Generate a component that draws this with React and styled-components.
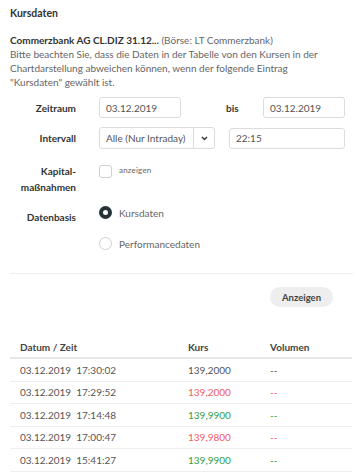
import styled, { createGlobalStyle } from "styled-components";

const GlobalStyle = createGlobalStyle`
  body {
    margin: 0;
    background: #fff;
    font-family: Lato, "Noto Sans", sans-serif;
  }
`;

const Page = styled.div`
  padding: 6px 5px 0 10px;
  color: #555;
`;

const Title = styled.h1`
  margin: 0 0 13px;
  font-size: 10.5px;
  line-height: 14px;
  font-weight: 700;
  color: #333;
`;

const Intro = styled.p`
  margin: 0;
  padding-right: 26px;
  font-size: 10px;
  line-height: 14px;
  color: #666;
`;

const Strong = styled.strong`
  color: #333;
`;

const Form = styled.div`
  margin-top: 8px;
  display: flex;
  flex-direction: column;
`;

const Row = styled.div`
  display: flex;
  align-items: ${(p) => (p.$top ? "flex-start" : "center")};
  margin-top: ${(p) => p.$mt || 0}px;
`;

const Label = styled.div`
  width: 66px;
  margin-right: 23px;
  margin-top: ${(p) => p.$mt || 0}px;
  text-align: right;
  font-size: 10px;
  line-height: 16px;
  font-weight: 700;
  color: #333;
`;

const SideLabel = styled.div`
  width: 14px;
  margin: 0 23px 0 45px;
  font-size: 10px;
  font-weight: 700;
  color: #333;
`;

const Input = styled.div`
  box-sizing: border-box;
  width: ${(p) => p.$w}px;
  height: 21px;
  margin-left: ${(p) => p.$ml || 0}px;
  padding: 0 6px;
  display: flex;
  align-items: center;
  border: 1px solid #dcdcdc;
  border-radius: 3px;
  font-size: 10px;
  color: #555;
  overflow: hidden;
  white-space: nowrap;
`;

const Select = styled.div`
  box-sizing: border-box;
  width: 116px;
  height: 22px;
  display: flex;
  border: 1px solid #dcdcdc;
  border-radius: 3px;
  font-size: 10px;
  color: #555;
`;

const SelectText = styled.div`
  flex: 1;
  padding: 0 6px;
  display: flex;
  align-items: center;
  overflow: hidden;
  white-space: nowrap;
`;

const SelectArrow = styled.div`
  width: 20px;
  display: flex;
  align-items: center;
  justify-content: center;
  border-left: 1px solid #dcdcdc;
`;

const Check = styled.div`
  box-sizing: border-box;
  width: 13px;
  height: 13px;
  margin-top: 2px;
  border: 1px solid #cfcfcf;
  border-radius: 3px;
`;

const SmallText = styled.span`
  margin-left: 7px;
  margin-top: 2px;
  font-size: 8px;
  color: #666;
  letter-spacing: 0.2px;
`;

const Options = styled.div`
  display: flex;
  flex-direction: column;
  gap: 18px;
`;

const Option = styled.div`
  display: flex;
  align-items: center;
  font-size: 10px;
  color: #666;
`;

const Radio = styled.span`
  box-sizing: border-box;
  width: 13px;
  height: 13px;
  margin-right: 7px;
  border-radius: 50%;
  border: ${(p) => (p.$on ? "4px solid #263238" : "1px solid #d0d0d0")};
  background: #fff;
`;

const Divider = styled.hr`
  margin: 23px 0 0;
  border: none;
  border-top: 1px solid #eeeeee;
`;

const Actions = styled.div`
  display: flex;
  justify-content: flex-end;
  padding-right: 20px;
  margin-top: 13px;
`;

const Button = styled.button`
  width: 63px;
  height: 20px;
  border: none;
  border-radius: 10px;
  background: #eeeeee;
  color: #444;
  font-family: inherit;
  font-size: 9.5px;
  font-weight: 700;
  cursor: pointer;
`;

const Table = styled.div`
  margin-top: 30px;
  margin-right: 1px;
`;

const Head = styled.div`
  display: grid;
  grid-template-columns: 168px 82px 1fr;
  padding-left: 10px;
  height: 20px;
  align-items: center;
  border-bottom: 2px solid #e6e6e6;
  font-size: 10px;
  font-weight: 700;
  color: #444;
`;

const TRow = styled.div`
  display: grid;
  grid-template-columns: 168px 82px 1fr;
  padding-left: 10px;
  height: 21.5px;
  align-items: center;
  border-bottom: 1px solid #eeeeee;
  font-size: 10px;
  color: #555;
`;

const Cell = styled.span`
  color: ${(p) => (p.$trend === "up" ? "#2ea043" : p.$trend === "down" ? "#f25a64" : "#555")};
  white-space: pre;
`;

const rows = [
  { date: "03.12.2019  17:30:02", kurs: "139,2000", trend: "" },
  { date: "03.12.2019  17:29:52", kurs: "139,2000", trend: "down" },
  { date: "03.12.2019  17:14:48", kurs: "139,9900", trend: "up" },
  { date: "03.12.2019  17:00:47", kurs: "139,9800", trend: "down" },
  { date: "03.12.2019  15:41:27", kurs: "139,9900", trend: "up" },
];

const App = () => {
  return (
    <>
      <GlobalStyle />
      <Page>
        <Title>Kursdaten</Title>
        <Intro>
          <Strong>Commerzbank AG CL.DIZ 31.12...</Strong> (Börse: LT Commerzbank)
          <br />
          Bitte beachten Sie, dass die Daten in der Tabelle von den Kursen in der
          Chartdarstellung abweichen können, wenn der folgende Eintrag
          "Kursdaten" gewählt ist.
        </Intro>

        <Form>
          <Row>
            <Label>Zeitraum</Label>
            <Input $w={82}>03.12.2019</Input>
            <SideLabel>bis</SideLabel>
            <Input $w={82}>03.12.2019</Input>
          </Row>
          <Row $mt={9}>
            <Label>Intervall</Label>
            <Select>
              <SelectText>Alle (Nur Intraday)</SelectText>
              <SelectArrow>
                <svg width="7" height="5" viewBox="0 0 7 5">
                  <path d="M1 1l2.5 2.5L6 1" fill="none" stroke="#333" strokeWidth="1.4" />
                </svg>
              </SelectArrow>
            </Select>
            <Input $w={116} $ml={14}>22:15</Input>
          </Row>
          <Row $top $mt={14}>
            <Label>
              Kapital-
              <br />
              maßnahmen
            </Label>
            <Check />
            <SmallText>anzeigen</SmallText>
          </Row>
          <Row $top $mt={11}>
            <Label $mt={3}>Datenbasis</Label>
            <Options>
              <Option>
                <Radio $on />
                Kursdaten
              </Option>
              <Option>
                <Radio />
                Performancedaten
              </Option>
            </Options>
          </Row>
        </Form>

        <Divider />
        <Actions>
          <Button>Anzeigen</Button>
        </Actions>

        <Table>
          <Head>
            <span>Datum / Zeit</span>
            <span>Kurs</span>
            <span>Volumen</span>
          </Head>
          {rows.map((r) => (
            <TRow key={r.date}>
              <Cell>{r.date}</Cell>
              <Cell $trend={r.trend}>{r.kurs}</Cell>
              <Cell $trend={r.trend}>--</Cell>
            </TRow>
          ))}
        </Table>
      </Page>
    </>
  );
};

export default App;
